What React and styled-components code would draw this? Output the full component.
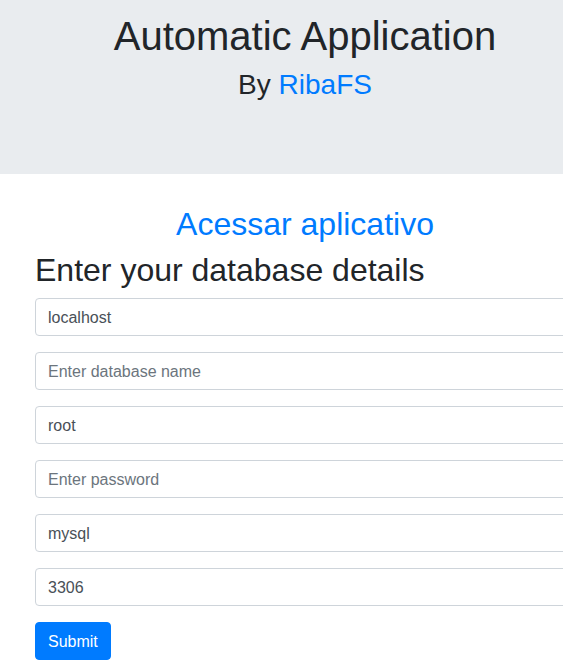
import React from "react";
import styled, { createGlobalStyle } from "styled-components";

const Global = createGlobalStyle`
  html, body { margin: 0; padding: 0; overflow-x: hidden; background: #fff; }
  body {
    font-family: "Liberation Sans", Arial, Helvetica, sans-serif;
    font-size: 16px;
    line-height: 1.5;
    color: #212529;
  }
  * { box-sizing: border-box; }
`;

const Jumbotron = styled.header`
  background: #e9ecef;
  height: 174px;
  padding-top: 12px;
  margin-bottom: 31px;
`;

const Container = styled.div`
  width: 540px;
  margin-left: 35px;
  text-align: ${(p) => (p.$center ? "center" : "left")};
`;

const Title = styled.h1`
  margin: 0 0 8px;
  font-size: 40px;
  font-weight: 400;
  line-height: 1.2;
`;

const Byline = styled.h3`
  margin: 0;
  font-size: 28px;
  font-weight: 400;
  line-height: 1.2;
`;

const Link = styled.a`
  color: #007bff;
  text-decoration: none;
`;

const Heading = styled.h2`
  margin: 0 0 8px;
  font-size: 32px;
  font-weight: 400;
  line-height: 1.2;
  text-align: ${(p) => (p.$center ? "center" : "left")};
`;

const Form = styled.form`
  display: flex;
  flex-direction: column;
  align-items: flex-start;
`;

const Input = styled.input`
  display: block;
  width: 540px;
  height: 38px;
  margin: 0 0 16px;
  padding: 7px 12px 5px;
  font-family: inherit;
  font-size: 16px;
  line-height: 1.5;
  color: #495057;
  background: #fff;
  border: 1px solid #ced4da;
  border-radius: 4px;
  outline: none;
  &::placeholder { color: #6c757d; opacity: 1; }
`;

const Button = styled.button`
  height: 38px;
  padding: 7px 12px 5px;
  font-family: inherit;
  font-size: 16px;
  line-height: 1.5;
  color: #fff;
  background: #007bff;
  border: 1px solid #007bff;
  border-radius: 4px;
  cursor: pointer;
`;

export default function App() {
  return (
    <>
      <Global />
      <Jumbotron>
        <Container $center>
          <Title>Automatic Application</Title>
          <Byline>
            By <Link href="#">RibaFS</Link>
          </Byline>
        </Container>
      </Jumbotron>
      <Container>
        <Heading $center>
          <Link href="#">Acessar aplicativo</Link>
        </Heading>
        <Heading>Enter your database details</Heading>
        <Form onSubmit={(e) => e.preventDefault()}>
          <Input type="text" defaultValue="localhost" />
          <Input type="text" placeholder="Enter database name" />
          <Input type="text" defaultValue="root" />
          <Input type="password" placeholder="Enter password" />
          <Input type="text" defaultValue="mysql" />
          <Input type="text" defaultValue="3306" />
          <Button type="submit">Submit</Button>
        </Form>
      </Container>
    </>
  );
}
